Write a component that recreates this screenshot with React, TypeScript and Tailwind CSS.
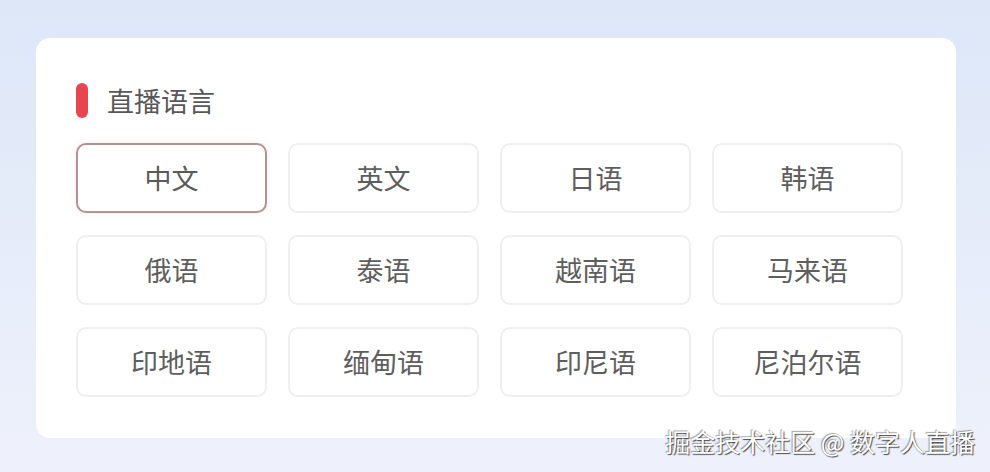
import React from 'react';

const languages = [
  '中文', '英文', '日语', '韩语',
  '俄语', '泰语', '越南语', '马来语',
  '印地语', '缅甸语', '印尼语', '尼泊尔语',
];

const cjk = { fontFamily: '"Noto Sans CJK SC", "Noto Sans", sans-serif' };

export default function App() {
  const selected = '中文';

  return (
    <div
      className="relative w-[990px] h-[472px] overflow-hidden bg-gradient-to-b from-[#dde7f8] to-[#eef1fb] pt-[38px] pl-[36px]"
      style={cjk}
    >
      <div className="w-[920px] h-[400px] rounded-[14px] bg-white pl-[40px] pt-[44px]">
        {/* Header */}
        <div className="flex items-center gap-[19px] h-[36px]">
          <span className="w-[12px] h-[35px] rounded-full bg-[#e8464e]" />
          <h2 className="text-[27px] leading-none text-[#585858]">直播语言</h2>
        </div>

        {/* Language grid */}
        <div className="mt-[25px] grid grid-cols-[repeat(4,191px)] gap-x-[21px] gap-y-[22px]">
          {languages.map(lang => {
            const isSelected = lang === selected;
            return (
              <button
                key={lang}
                className={
                  isSelected
                    ? 'h-[70px] rounded-[10px] border-2 border-[#b59292] bg-white text-[27px] text-[#5a5a5a] shadow-[0_0_6px_rgba(230,150,150,0.2)]'
                    : 'h-[70px] rounded-[10px] border-2 border-[#efefef] bg-white text-[27px] text-[#5e5e5e]'
                }
              >
                {lang}
              </button>
            );
          })}
        </div>
      </div>

      {/* Watermark */}
      <div className="absolute right-[15px] top-[424px] text-[25px] leading-[34px] text-white [text-shadow:1px_1px_1px_rgba(0,0,0,0.7),-1px_-1px_1px_rgba(0,0,0,0.35)]">
        掘金技术社区 @ 数字人直播
      </div>
    </div>
  );
}
